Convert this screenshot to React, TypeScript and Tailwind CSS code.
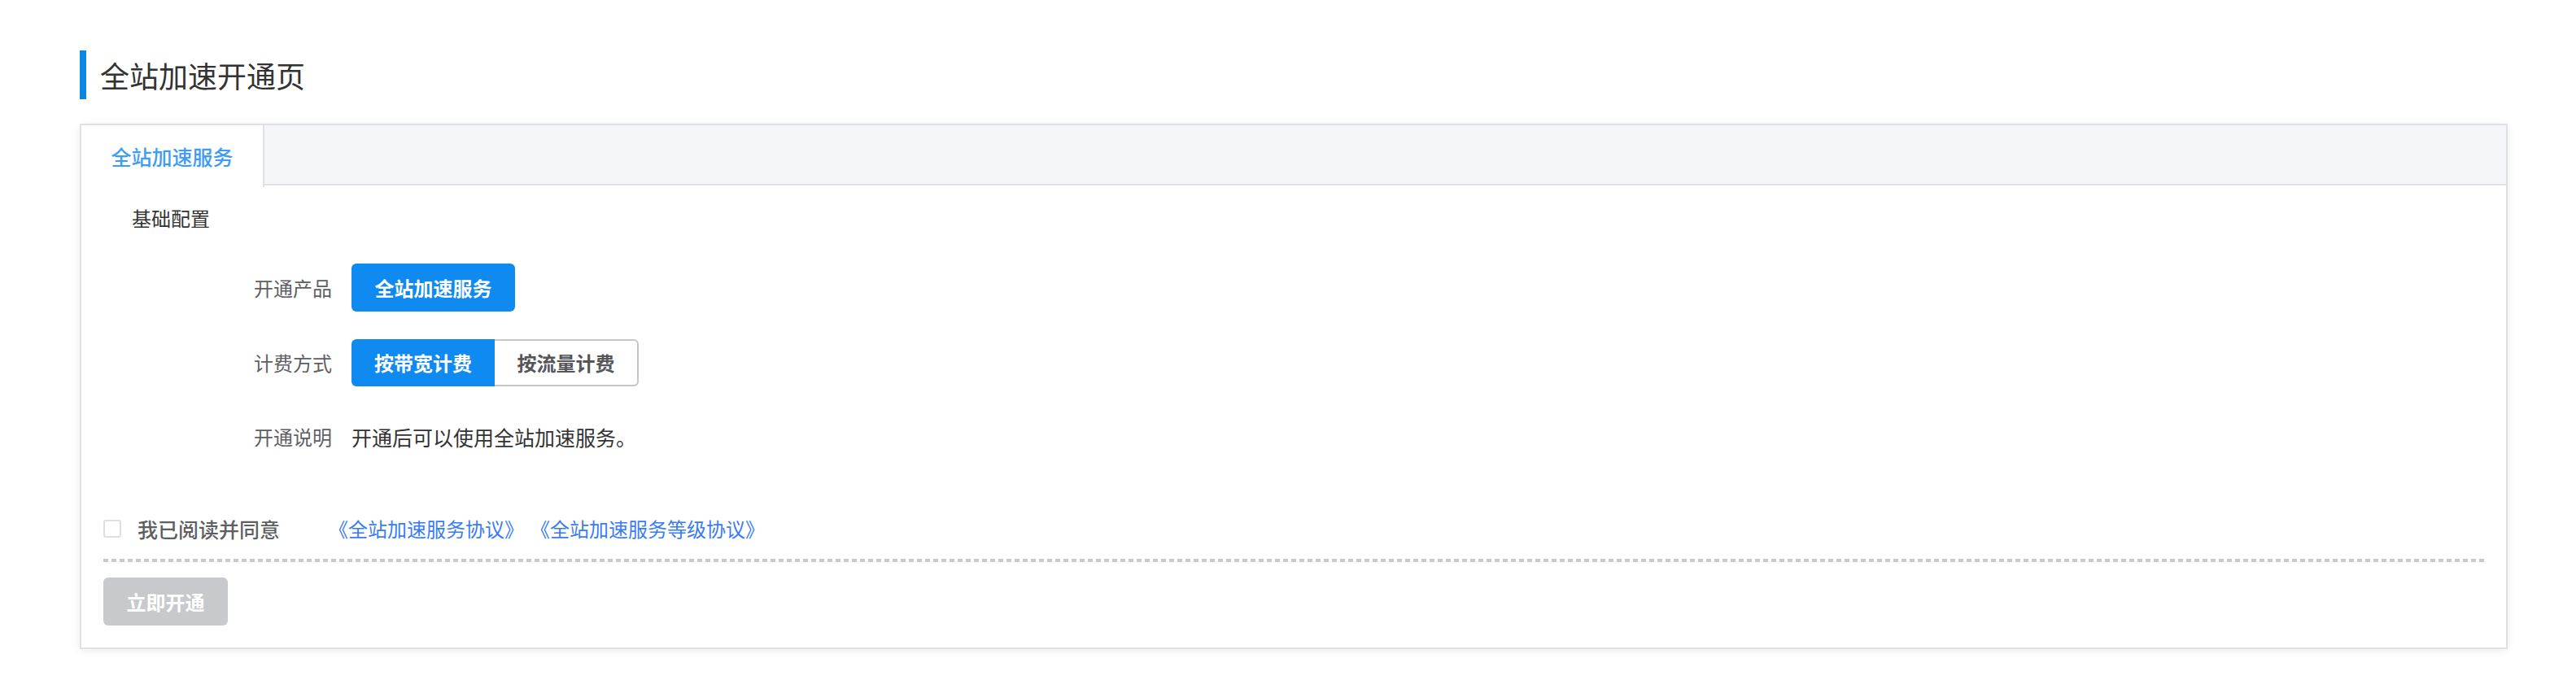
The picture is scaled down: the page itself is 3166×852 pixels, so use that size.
import React from 'react';

const FormRow: React.FC<{ label: string; className?: string; children: React.ReactNode }> = ({ label, className, children }) => (
  <div className={`flex items-center ${className ?? ''}`}>
    <span className="w-[96px] text-right text-[24px] leading-[36px] text-[#5f6065]">{label}</span>
    <div className="ml-[24px] flex items-center">{children}</div>
  </div>
);

export default function App() {
  return (
    <div className="min-h-screen bg-white pl-[98px] pr-[84px] pt-[62px] font-['Noto_Sans_CJK_SC',sans-serif]">
      <div className="flex h-[60px] items-center border-l-[8px] border-[#0b86e3] pl-[17px]">
        <h1 className="text-[36px] leading-none text-[#333]">全站加速开通页</h1>
      </div>

      <div className="mt-[30px] border-2 border-[#dfe1e6] bg-white shadow-[0_2px_10px_rgba(0,0,0,0.08)]">
        {/* tabs */}
        <div className="flex h-[74px] border-b-2 border-[#dfe1e6] bg-[#f5f6fa]">
          <div className="-mb-[2px] flex h-[76px] w-[225px] items-center justify-center border-r-2 border-[#dfe1e6] bg-white">
            <span className="text-[25px] font-medium leading-none text-[#3d9cf5]">全站加速服务</span>
          </div>
        </div>

        {/* basic config */}
        <div className="pl-[62px] pt-[22px] text-[24px] leading-[36px] text-[#333]">基础配置</div>

        <div className="pl-[212px]">
          <FormRow label="开通产品" className="mt-[38px]">
            <button className="h-[59px] w-[201px] rounded-[6px] bg-[#0f8af0] text-[24px] font-bold text-white">
              全站加速服务
            </button>
          </FormRow>

          <FormRow label="计费方式" className="mt-[34px]">
            <div className="flex h-[58px]">
              <button className="h-full w-[176px] rounded-l-[6px] bg-[#0f8af0] text-[24px] font-bold text-white">
                按带宽计费
              </button>
              <button className="h-full w-[177px] rounded-r-[6px] border-2 border-l-0 border-[#c4c6cc] bg-white text-[24px] font-bold text-[#55565a]">
                按流量计费
              </button>
            </div>
          </FormRow>

          <FormRow label="开通说明" className="mt-[44px]">
            <span className="text-[25px] leading-[36px] text-[#333]">开通后可以使用全站加速服务。</span>
          </FormRow>
        </div>

        {/* agreement + submit */}
        <div className="px-[27px] pb-[27px] pt-[77px]">
          <div className="flex h-[36px] items-center">
            <span className="h-[22px] w-[22px] rounded-[3px] border-2 border-[#dcdfe6] bg-white" />
            <span className="ml-[20px] text-[25px] font-medium leading-[36px] text-[#5e5f63]">我已阅读并同意</span>
            <a className="ml-[60px] text-[24px] leading-[36px] text-[#3a7cf4]">《全站加速服务协议》</a>
            <a className="ml-[8px] text-[24px] leading-[36px] text-[#3a7cf4]">《全站加速服务等级协议》</a>
          </div>

          <div className="mt-[19px] h-[4px] bg-[linear-gradient(to_right,#c9c9c9_60%,transparent_60%)] bg-[length:10px_4px] bg-repeat-x" />

          <button className="mt-[19px] h-[59px] w-[153px] rounded-[6px] bg-[#c8c9cc] text-[24px] font-bold text-white">
            立即开通
          </button>
        </div>
      </div>
    </div>
  );
}
